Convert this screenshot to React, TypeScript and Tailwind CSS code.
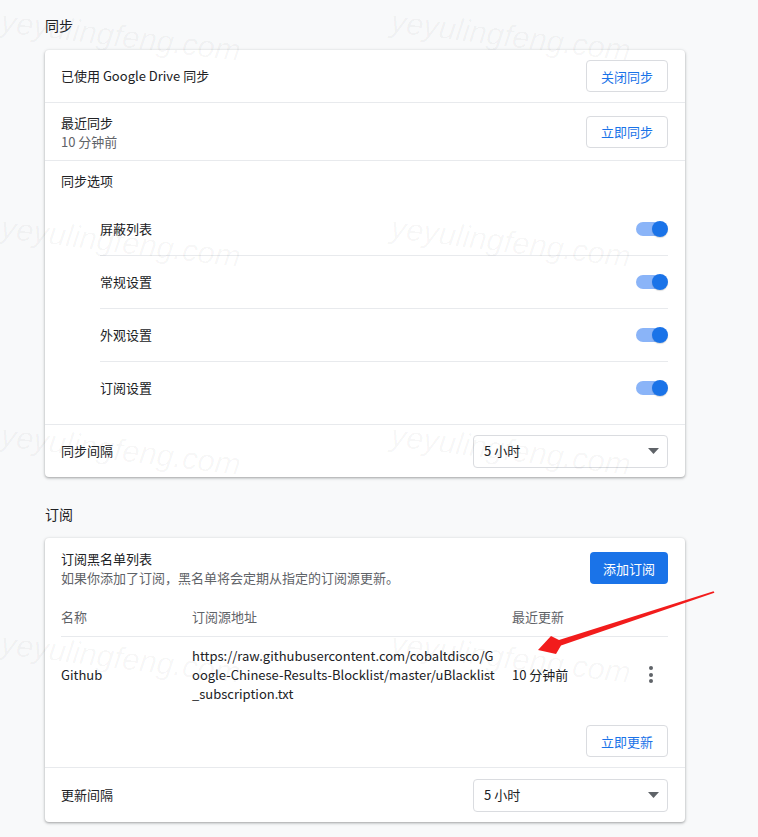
import React from "react";

const FONT = '"Noto Sans CJK SC", "Noto Sans", sans-serif';

function OutlineButton({ children }: { children: React.ReactNode }) {
  return (
    <button className="h-[32px] px-[14px] rounded-[4px] border border-[#dadce0] bg-white text-[13px] text-[#1a73e8] leading-none">
      {children}
    </button>
  );
}

function Toggle() {
  return (
    <div className="relative w-[32px] h-[16px] flex items-center">
      <div className="w-[26px] h-[14px] rounded-full bg-[#8ab4f8]" />
      <div className="absolute right-0 top-0 w-[16px] h-[16px] rounded-full bg-[#1a73e8] shadow-[0_1px_1px_rgba(0,0,0,0.15)]" />
    </div>
  );
}

function Select() {
  return (
    <div className="w-[195px] h-[33px] rounded-[4px] border border-[#dadce0] bg-white flex items-center justify-between pl-[10px] pr-[8px]">
      <span className="text-[13px] text-[#202124]">5 小时</span>
      <svg width="11" height="6" viewBox="0 0 11 6">
        <path d="M0 0 L11 0 L5.5 6 Z" fill="#5f6368" />
      </svg>
    </div>
  );
}

const Divider = () => <div className="h-px bg-[#e8eaed]" />;

const cardCls =
  "w-[640px] bg-white rounded-[4px] shadow-[0_1px_2px_rgba(60,64,67,0.3),0_1px_3px_1px_rgba(60,64,67,0.15)]";

export default function App() {
  const subs = ["屏蔽列表", "常规设置", "外观设置", "订阅设置"];
  const marks: [number, number][] = [
    [3, 6],
    [393, 6],
    [3, 212],
    [393, 212],
    [3, 420],
    [393, 420],
    [3, 628],
    [393, 628],
  ];
  return (
    <div
      className="relative min-h-[837px] w-[758px] overflow-hidden bg-[#f8f9fa] pl-[45px] pt-[15px] pb-[15px] text-[#202124]"
      style={{ fontFamily: FONT }}
    >
      {/* 同步 */}
      <div className="text-[14px] leading-[20px] mb-[15px]">同步</div>
      <div className={cardCls}>
        <div className="h-[52px] pl-4 pr-[17px] flex items-center justify-between">
          <span className="text-[13px]">已使用 Google Drive 同步</span>
          <OutlineButton>关闭同步</OutlineButton>
        </div>
        <Divider />
        <div className="h-[57px] pl-4 pr-[17px] flex items-center justify-between">
          <div className="flex flex-col text-[13px] leading-[19px]">
            <span>最近同步</span>
            <span className="text-[#5f6368]">10 分钟前</span>
          </div>
          <OutlineButton>立即同步</OutlineButton>
        </div>
        <Divider />
        <div className="pl-4 pr-[17px] pt-[10px] pb-[10px]">
          <div className="text-[13px] leading-[20px]">同步选项</div>
          <div className="ml-[39px] mt-[12px] flex flex-col">
            {subs.map((s, i) => (
              <div key={s}>
                {i > 0 && <Divider />}
                <div className="h-[52px] flex items-center justify-between">
                  <span className="text-[13px]">{s}</span>
                  <Toggle />
                </div>
              </div>
            ))}
          </div>
        </div>
        <Divider />
        <div className="h-[52px] pl-4 pr-[17px] flex items-center justify-between">
          <span className="text-[13px]">同步间隔</span>
          <Select />
        </div>
      </div>

      {/* 订阅 */}
      <div className="text-[14px] leading-[20px] mt-[27px] mb-[14px]">订阅</div>
      <div className={cardCls}>
        <div className="pl-4 pr-[17px] pt-[10px]">
          <div className="h-[40px] flex items-center justify-between">
            <div className="flex flex-col text-[13px] leading-[19px]">
              <span>订阅黑名单列表</span>
              <span className="text-[#5f6368]">如果你添加了订阅，黑名单将会定期从指定的订阅源更新。</span>
            </div>
            <button className="h-[32px] px-[13px] rounded-[4px] bg-[#1a73e8] text-white text-[13px] leading-none">
              添加订阅
            </button>
          </div>
          <div className="mt-[10px] h-[38px] flex items-center text-[13px] text-[#5f6368]">
            <span className="w-[131px]">名称</span>
            <span className="w-[320px]">订阅源地址</span>
            <span>最近更新</span>
          </div>
          <Divider />
          <div className="py-[9px] flex items-center text-[13px]">
            <span className="w-[131px]">Github</span>
            <div className="w-[320px] flex flex-col leading-[19px]">
              <span>https://raw.githubusercontent.com/cobaltdisco/G</span>
              <span>oogle-Chinese-Results-Blocklist/master/uBlacklist</span>
              <span>_subscription.txt</span>
            </div>
            <span className="flex-1">10 分钟前</span>
            <div className="w-[34px] h-[34px] flex flex-col items-center justify-center gap-[2.5px]">
              <span className="w-[4px] h-[4px] rounded-full bg-[#5f6368]" />
              <span className="w-[4px] h-[4px] rounded-full bg-[#5f6368]" />
              <span className="w-[4px] h-[4px] rounded-full bg-[#5f6368]" />
            </div>
          </div>
          <div className="mt-[13px] pb-[10px] flex justify-end">
            <OutlineButton>立即更新</OutlineButton>
          </div>
        </div>
        <Divider />
        <div className="h-[54px] pl-4 pr-[17px] flex items-center justify-between">
          <span className="text-[13px]">更新间隔</span>
          <Select />
        </div>
      </div>

      {/* watermarks */}
      {marks.map(([x, y], i) => (
        <span
          key={i}
          className="pointer-events-none absolute origin-top-left rotate-[7deg] text-[31px] italic leading-none text-[rgba(0,0,0,0.035)] whitespace-nowrap"
          style={{ left: x, top: y, fontFamily: '"Liberation Sans", sans-serif' }}
        >
          yeyulingfeng.com
        </span>
      ))}

      {/* red arrow annotation */}
      <svg className="pointer-events-none absolute left-0 top-0" width="758" height="837">
        <polygon
          points="538,650 551,636 559,640 713.6,591.2 714.4,592.8 561,645.6 556,654"
          fill="#f21c1c"
        />
      </svg>
    </div>
  );
}
